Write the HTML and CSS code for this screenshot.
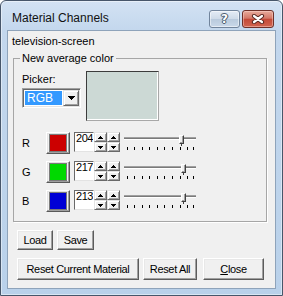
FILE: index.html
```html
<!DOCTYPE html>
<html>
<head>
<meta charset="utf-8">
<link rel="stylesheet" href="styles.css">
</head>
<body>
<div class="window">
  <div class="titlebar">
    <span class="title">Material Channels</span>
    <div class="caption-btns">
      <div class="cap help"><span>?</span></div>
      <div class="cap close">
        <svg width="14" height="10" viewBox="0 0 14 10">
          <path d="M3 2 L11 8 M11 2 L3 8" stroke="#5a2a24" stroke-width="4.2" stroke-linecap="round"/>
          <path d="M3 2 L11 8 M11 2 L3 8" stroke="#fff" stroke-width="2.2" stroke-linecap="round"/>
        </svg>
      </div>
    </div>
  </div>
  <div class="client">
    <div class="name">television-screen</div>
    <fieldset class="group">
      <legend>New average color</legend>
      <div class="picker-row">
        <div class="picker-col">
          <div class="lbl">Picker:</div>
          <div class="select">
            <span class="sel-val">RGB</span>
            <span class="sel-arrow"><svg width="7" height="4" viewBox="0 0 7 4" shape-rendering="crispEdges"><path d="M0 0h7v1H0zM1 1h5v1H1zM2 2h3v1H2zM3 3h1v1H3z" fill="#000"/></svg></span>
          </div>
        </div>
        <div class="preview"></div>
      </div>
      <div class="channels">
        <div class="ch">
          <span class="ch-lbl">R</span>
          <div class="swatch"><div class="swatch-fill red"></div></div>
          <div class="spin">
            <div class="edit">204</div>
            <div class="updown"><span class="ud"><i class="up"></i></span><span class="ud"><i class="down"></i></span></div>
            <div class="updown"><span class="ud"><i class="up"></i></span><span class="ud"><i class="down"></i></span></div>
          </div>
          <div class="slider">
            <div class="groove"></div>
            <div class="thumb" style="left:55px"></div>
            <div class="ticks"><i class="tick"></i></div>
          </div>
        </div>
        <div class="ch">
          <span class="ch-lbl">G</span>
          <div class="swatch"><div class="swatch-fill green"></div></div>
          <div class="spin">
            <div class="edit">217</div>
            <div class="updown"><span class="ud"><i class="up"></i></span><span class="ud"><i class="down"></i></span></div>
            <div class="updown"><span class="ud"><i class="up"></i></span><span class="ud"><i class="down"></i></span></div>
          </div>
          <div class="slider">
            <div class="groove"></div>
            <div class="thumb" style="left:57px"></div>
            <div class="ticks"><i class="tick"></i></div>
          </div>
        </div>
        <div class="ch">
          <span class="ch-lbl">B</span>
          <div class="swatch"><div class="swatch-fill blue"></div></div>
          <div class="spin">
            <div class="edit">213</div>
            <div class="updown"><span class="ud"><i class="up"></i></span><span class="ud"><i class="down"></i></span></div>
            <div class="updown"><span class="ud"><i class="up"></i></span><span class="ud"><i class="down"></i></span></div>
          </div>
          <div class="slider">
            <div class="groove"></div>
            <div class="thumb" style="left:57px"></div>
            <div class="ticks"><i class="tick"></i></div>
          </div>
        </div>
      </div>
    </fieldset>
    <div class="btn-row row1">
      <div class="btn w-load">Load</div>
      <div class="btn w-save">Save</div>
    </div>
    <div class="btn-row row2">
      <div class="btn w-rcm">Reset Current Material</div>
      <div class="btn w-ra">Reset All</div>
      <div class="btn w-close"><u>C</u>lose</div>
    </div>
  </div>
</div>
</body>
</html>
```
FILE: styles.css
```css
html, body {
  margin: 0;
  padding: 0;
  background: #fff;
}
body {
  font-family: "Liberation Sans", Arial, sans-serif;
  font-size: 11px;
  color: #000;
}
.window {
  width: 283px;
  height: 296px;
  box-sizing: border-box;
  border: 1px solid #47566a;
  border-radius: 6px 6px 0 0;
  background: linear-gradient(#d3e2f3, #c3d7ed 30px, #b9d1ea);
  box-shadow: inset 0 0 0 1px rgba(255,255,255,0.45);
  display: flex;
  flex-direction: column;
  overflow: hidden;
}
.titlebar {
  height: 29px;
  flex: none;
  display: flex;
  align-items: flex-start;
  padding: 0 8px 0 11px;
}
.title {
  flex: 1;
  font-size: 12px;
  line-height: 15px;
  margin-top: 10px;
  color: #111;
}
.caption-btns {
  display: flex;
  gap: 2px;
  margin-top: 9px;
}
.cap {
  height: 18px;
  box-sizing: border-box;
  border-radius: 3px;
  display: flex;
  align-items: center;
  justify-content: center;
}
.help {
  width: 31px;
  border: 1px solid #71849c;
  background: linear-gradient(#e4ecf6, #cfdbe9 48%, #b9cadd 52%, #c9d8e9);
  box-shadow: inset 0 0 0 1px rgba(255,255,255,0.5);
}
.help span {
  font-family: "DejaVu Sans", sans-serif;
  font-weight: bold;
  font-size: 12px;
  line-height: 12px;
  color: #fff;
  text-shadow: 0 0 1px #3d4b5c, 0 0 1px #3d4b5c, 1px 0 0 #56677a, -1px 0 0 #56677a, 0 1px 0 #56677a, 0 -1px 0 #56677a;
}
.close {
  width: 32px;
  border: 1px solid #6e3029;
  background: linear-gradient(#e8ab9c, #d47868 45%, #c44a38 52%, #d06450);
  box-shadow: inset 0 0 0 1px rgba(255,220,210,0.45);
}
.close svg { display: block; }
.client {
  flex: 1;
  margin: 0 6px 6px 6px;
  border: 1px solid #8ea3ba;
  background: #f0f0f0;
  display: flex;
  flex-direction: column;
}
.name {
  line-height: 13px;
  padding: 4px 0 0 4px;
}
.group {
  margin: 4px 8px 0 5px;
  padding: 6px 0 9px 8px;
  border: 1px solid #a6a6a6;
  box-shadow: 1px 1px 0 #fff;
  min-width: 0;
}
.group legend {
  padding: 0 2px;
  margin-left: -2px;
  line-height: 13px;
}
.picker-row {
  display: flex;
  gap: 5px;
}
.picker-col {
  width: 59px;
  padding-top: 2px;
}
.lbl {
  line-height: 13px;
}
.select {
  margin-top: 2px;
  height: 20px;
  box-sizing: border-box;
  border: 1px solid;
  border-color: #a0a0a0 #fff #fff #a0a0a0;
  box-shadow: inset 1px 1px 0 #696969, inset -1px -1px 0 #e3e3e3;
  background: #fff;
  display: flex;
  padding: 1px;
}
.sel-val {
  flex: 1;
  margin: 1px;
  background: #3399ff;
  color: #fff;
  line-height: 14px;
  padding-left: 2px;
  font-size: 12px;
}
.sel-arrow {
  width: 16px;
  height: 16px;
  box-sizing: border-box;
  border: 1px solid;
  border-color: #e3e3e3 #696969 #696969 #e3e3e3;
  box-shadow: inset 1px 1px 0 #fff, inset -1px -1px 0 #a0a0a0;
  background: #f0f0f0;
  display: flex;
  justify-content: center;
  align-items: center;
}
.sel-arrow svg { display: block; }
.preview {
  width: 73px;
  height: 50px;
  box-sizing: border-box;
  border: 1px solid;
  border-color: #3c3c3c #a8a8a8 #a8a8a8 #3c3c3c;
  box-shadow: inset -1px -1px 0 #fff;
  background: #ccd9d5;
}
.channels {
  margin-top: 11px;
  display: flex;
  flex-direction: column;
  gap: 7px;
}
.ch {
  display: flex;
  align-items: flex-start;
  height: 22px;
}
.ch-lbl {
  flex: none;
  width: 24px;
  line-height: 22px;
}
.swatch {
  flex: none;
  width: 24px;
  height: 22px;
  box-sizing: border-box;
  border: 1px solid;
  border-color: #fff #595959 #595959 #fff;
  box-shadow: inset -1px -1px 0 #a0a0a0, inset 1px 1px 0 #e3e3e3;
  background: #f0f0f0;
  display: flex;
  align-items: center;
  justify-content: center;
}
.swatch-fill {
  width: 18px;
  height: 18px;
  box-sizing: border-box;
  border: 1px solid #7a7a7a;
  margin-right: 1px;
}
.red { background: #cc0000; }
.green { background: #00d900; }
.blue { background: #0000d5; }
.spin {
  flex: none;
  display: flex;
  margin-left: 4px;
  height: 20px;
}
.edit {
  flex: none;
  width: 20px;
  box-sizing: border-box;
  border: 1px solid;
  border-color: #696969 transparent #e3e3e3 #696969;
  background: #fff;
  padding-left: 1px;
  line-height: 11px;
  letter-spacing: -0.45px;
  overflow: hidden;
  white-space: nowrap;
}
.updown {
  flex: none;
  width: 13px;
  display: flex;
  flex-direction: column;
}
.ud {
  height: 10px;
  box-sizing: border-box;
  border: 1px solid;
  border-color: #e3e3e3 #696969 #696969 #e3e3e3;
  box-shadow: inset 1px 1px 0 #fff, inset -1px -1px 0 #a0a0a0;
  background: #f0f0f0;
  display: flex;
  justify-content: center;
  align-items: center;
}
.up, .down {
  display: block;
  width: 1px;
  height: 1px;
  background: #000;
}
.up {
  margin-top: -2px;
  box-shadow: -1px 1px 0 #000, 0 1px 0 #000, 1px 1px 0 #000,
    -2px 2px 0 #000, -1px 2px 0 #000, 0 2px 0 #000, 1px 2px 0 #000, 2px 2px 0 #000;
}
.down {
  margin-top: -2px;
  box-shadow: -2px 0 0 #000, -1px 0 0 #000, 1px 0 0 #000, 2px 0 0 #000,
    -1px 1px 0 #000, 0 1px 0 #000, 1px 1px 0 #000, 0 2px 0 #000;
}
.slider {
  flex: none;
  position: relative;
  margin-left: 4px;
  width: 72px;
  height: 22px;
  box-sizing: border-box;
  padding-top: 5px;
}
.groove {
  height: 1px;
  border-top: 1px solid #a0a0a0;
  border-bottom: 1px solid #fff;
  background: #7a7a7a;
}
.thumb {
  position: absolute;
  top: 3px;
  width: 5px;
  height: 9px;
  box-sizing: border-box;
  border: 1px solid;
  border-color: #fff #404040 #404040 #fff;
  box-shadow: inset -1px -1px 0 #a0a0a0;
  background: #f0f0f0;
}
.thumb::after {
  content: "";
  position: absolute;
  left: 1px;
  bottom: -3px;
  width: 1px;
  height: 2px;
  background: #404040;
}
.ticks {
  margin-top: 7px;
  padding-left: 3px;
  height: 3px;
}
.tick {
  display: block;
  width: 1px;
  height: 3px;
  background: #000;
  box-shadow: 7px 0 0 #000, 15px 0 0 #000, 22px 0 0 #000, 30px 0 0 #000,
    37px 0 0 #000, 45px 0 0 #000, 53px 0 0 #000, 60px 0 0 #000, 66px 0 0 #000;
}
.btn-row {
  display: flex;
  gap: 4px;
  padding-left: 9px;
  margin-top: 8px;
}
.row1 .btn { height: 20px; }
.row2 .btn { height: 22px; }
.btn {
  box-sizing: border-box;
  border: 1px solid;
  border-color: #fff #5c5c5c #5c5c5c #fff;
  box-shadow: inset -1px -1px 0 #a0a0a0, inset 1px 1px 0 #e8e8e8;
  background: #f0f0f0;
  display: flex;
  align-items: center;
  justify-content: center;
  letter-spacing: -0.35px;
  white-space: nowrap;
}
.w-load { width: 36px; }
.w-save { width: 37px; }
.w-rcm { width: 122px; }
.w-ra { width: 54px; }
.w-close { width: 61px; margin-left: 2px; }
.btn u { text-decoration: underline; }
```
